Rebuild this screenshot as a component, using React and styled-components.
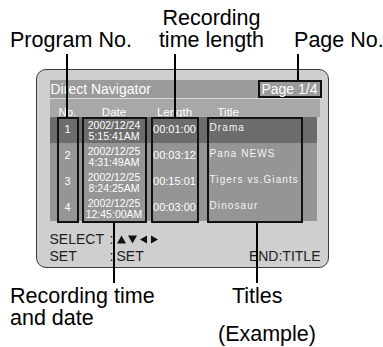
import styled, { createGlobalStyle } from "styled-components";

const GlobalStyle = createGlobalStyle`
  body {
    margin: 0;
    background: #fff;
    font-family: "Liberation Sans", Arial, sans-serif;
  }
`;

const Figure = styled.div`
  position: relative;
  width: 383px;
  height: 347px;
  overflow: hidden;
  color: #000;
`;

const TopLabels = styled.div`
  display: flex;
  align-items: flex-end;
  height: 51px;
  font-size: 21.5px;
  line-height: 22px;
`;

const Label = styled.div`
  margin-left: ${(p) => p.$left}px;
  text-align: center;
  white-space: nowrap;
`;

const Screen = styled.div`
  box-sizing: border-box;
  margin: 18px 0 0 36px;
  width: 293px;
  height: 199px;
  padding: 9.5px 0 0 12.5px;
  border: 1.5px solid #3a3a3a;
  border-radius: 10px;
  background: #cfcfcf;
  display: flex;
  flex-direction: column;
`;

const TitleBar = styled.div`
  width: 272px;
  height: 18px;
  background: #9b9b9b;
  display: flex;
  justify-content: space-between;
  align-items: center;
  color: #fff;
  font-size: 14px;
  border-bottom: 1px solid #dadada;
`;

const TitleText = styled.span`
  padding-left: 1px;
`;

const PageBox = styled.div`
  box-sizing: border-box;
  width: 64px;
  height: 18px;
  border: 2px solid #111;
  text-align: right;
  padding-right: 2px;
  line-height: 14px;
`;

const cols = "7px 22px 3px 65px 4px 48px 8px 96px";

const ColHeader = styled.div`
  display: grid;
  grid-template-columns: ${cols} 17px;
  width: 270px;
  height: 18px;
  box-sizing: border-box;
  padding-top: 8px;
  background: #a8a8a8;
  color: #fff;
  font-size: 11.5px;
  line-height: 11px;
`;

const HeadCell = styled.span`
  grid-column: ${(p) => p.$col};
  text-align: ${(p) => (p.$left ? "left" : "center")};
  padding-left: ${(p) => (p.$left ? "11px" : "0")};
  white-space: nowrap;
`;

const Table = styled.div`
  display: grid;
  width: 267px;
  grid-template-columns: ${cols} 14px;
  grid-template-rows: repeat(4, 26px) 2px;
`;

const Stripe = styled.div`
  grid-row: ${(p) => p.$row};
  grid-column: 1 / -1;
  background: ${(p) => (p.$active ? "#6c6c6c" : "#959595")};
`;

const ColBox = styled.div`
  grid-row: 1 / -1;
  grid-column: ${(p) => p.$col};
  border: 2px solid #111;
`;

const Cell = styled.div`
  grid-row: ${(p) => p.$row};
  grid-column: ${(p) => p.$col};
  display: flex;
  flex-direction: column;
  align-items: center;
  justify-content: center;
  color: #fff;
  font-size: 11px;
  line-height: 11px;
  white-space: nowrap;
`;

const DateCell = styled(Cell)`
  font-size: 10.5px;
  line-height: 11px;
  padding-top: 2px;
`;

const TitleCell = styled.div`
  grid-row: ${(p) => p.$row};
  grid-column: 8;
  padding: 6px 0 0 3px;
  color: #f4f4f4;
  font-size: 10px;
  line-height: 10px;
  letter-spacing: 1.1px;
  white-space: nowrap;
`;

const Footer = styled.div`
  margin-top: 8.5px;
  width: 271px;
  display: grid;
  grid-template-columns: 60px 7px 1fr auto;
  font-size: 14px;
  line-height: 17px;
  color: #1e1e1e;
`;

const Arrows = styled.svg`
  display: block;
  margin-top: 4px;
`;

const BottomLabels = styled.div`
  display: grid;
  grid-template-columns: 218px auto;
  margin-top: 16.5px;
  font-size: 21.5px;
  line-height: 22px;
`;

const LeftNote = styled.div`
  padding-left: 10px;
  white-space: nowrap;
`;

const RightNote = styled.div`
  display: flex;
  flex-direction: column;
`;

const Titles = styled.span`
  padding-left: 14px;
`;

const Example = styled.span`
  margin-top: 16px;
`;

const Leader = styled.div`
  position: absolute;
  left: ${(p) => p.$x - 1}px;
  top: ${(p) => p.$y}px;
  width: 2px;
  height: ${(p) => p.$h}px;
  background: #000;
`;

const rows = [
  { no: 1, date: "2002/12/24", time: "5:15:41AM", len: "00:01:00", title: "Drama" },
  { no: 2, date: "2002/12/25", time: "4:31:49AM", len: "00:03:12", title: "Pana NEWS" },
  { no: 3, date: "2002/12/25", time: "8:24:25AM", len: "00:15:01", title: "Tigers vs.Giants" },
  { no: 4, date: "2002/12/25", time: "12:45:00AM", len: "00:03:00", title: "Dinosaur" },
];

const App = () => {
  return (
    <>
      <GlobalStyle />
      <Figure>
        <TopLabels>
          <Label $left={10}>Program No.</Label>
          <Label $left={27}>
            Recording
            <br />
            time length
          </Label>
          <Label $left={30}>Page No.</Label>
        </TopLabels>

        <Screen>
          <TitleBar>
            <TitleText>Direct Navigator</TitleText>
            <PageBox>Page 1/4</PageBox>
          </TitleBar>
          <ColHeader>
            <HeadCell $col={2}>No.</HeadCell>
            <HeadCell $col={4}>Date</HeadCell>
            <HeadCell $col={6}>Length</HeadCell>
            <HeadCell $col={8} $left>
              Title
            </HeadCell>
          </ColHeader>
          <Table>
            {rows.map((r, i) => (
              <Stripe key={"s" + r.no} $row={i + 1} $active={i === 0} />
            ))}
            <ColBox $col={2} />
            <ColBox $col={4} />
            <ColBox $col={6} />
            <ColBox $col={8} />
            {rows.map((r, i) => (
              <Cell key={"n" + r.no} $row={i + 1} $col={2}>
                {r.no}
              </Cell>
            ))}
            {rows.map((r, i) => (
              <DateCell key={"d" + r.no} $row={i + 1} $col={4}>
                <span>{r.date}</span>
                <span>{r.time}</span>
              </DateCell>
            ))}
            {rows.map((r, i) => (
              <Cell key={"l" + r.no} $row={i + 1} $col={6}>
                {r.len}
              </Cell>
            ))}
            {rows.map((r, i) => (
              <TitleCell key={"t" + r.no} $row={i + 1}>
                {r.title}
              </TitleCell>
            ))}
          </Table>
          <Footer>
            <span>SELECT</span>
            <span>:</span>
            <Arrows width="43" height="9" viewBox="0 0 43 9">
              <polygon points="0,8.5 4.5,0.5 9,8.5" fill="#111" />
              <polygon points="11,0.5 20,0.5 15.5,8.5" fill="#111" />
              <polygon points="23,4.5 30,0.5 30,8.5" fill="#111" />
              <polygon points="34,0.5 41,4.5 34,8.5" fill="#111" />
            </Arrows>
            <span />
            <span>SET</span>
            <span>:</span>
            <span>SET</span>
            <span>END:TITLE</span>
          </Footer>
        </Screen>

        <BottomLabels>
          <LeftNote>
            Recording time
            <br />
            and date
          </LeftNote>
          <RightNote>
            <Titles>Titles</Titles>
            <Example>(Example)</Example>
          </RightNote>
        </BottomLabels>

        <Leader $x={67} $y={54} $h={63} />
        <Leader $x={175} $y={54} $h={63} />
        <Leader $x={298} $y={54} $h={26} />
        <Leader $x={114} $y={223} $h={60} />
        <Leader $x={257} $y={223} $h={60} />
      </Figure>
    </>
  );
};

export default App;
